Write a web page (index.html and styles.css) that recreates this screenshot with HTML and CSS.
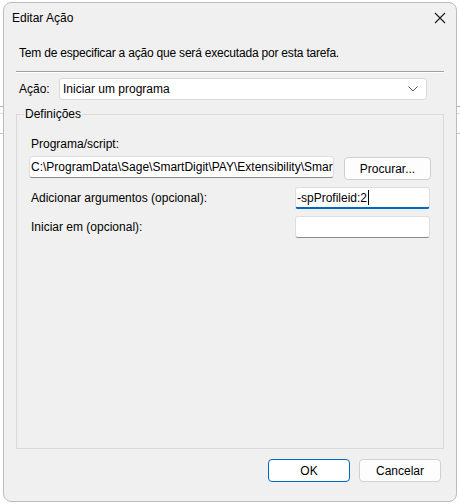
FILE: index.html
```html
<!DOCTYPE html>
<html lang="pt">
<head>
<meta charset="utf-8">
<title>Editar Ação</title>
<link rel="stylesheet" href="styles.css">
</head>
<body>
<div class="window">
  <div class="titlebar">
    <span class="title">Editar Ação</span>
    <span class="close" aria-label="Fechar">
      <svg width="12" height="12" viewBox="0 0 12 12"><path d="M1 1 L11 11 M11 1 L1 11" stroke="#1a1a1a" stroke-width="1.1" fill="none"/></svg>
    </span>
  </div>
  <div class="content">
    <p class="intro">Tem de especificar a ação que será executada por esta tarefa.</p>
    <div class="sep"></div>
    <div class="action-row">
      <span class="action-label">Ação:</span>
      <div class="combo">
        <span>Iniciar um programa</span>
        <svg class="chev" width="10" height="6" viewBox="0 0 10 6"><path d="M0.5 0.5 L5 5 L9.5 0.5" stroke="#5a5a5a" stroke-width="1" fill="none"/></svg>
      </div>
    </div>
    <fieldset class="group">
      <legend>Definições</legend>
      <div class="group-body">
        <div class="label prog-label">Programa/script:</div>
        <div class="prog-row">
          <div class="input prog-input">C:\ProgramData\Sage\SmartDigit\PAY\Extensibility\Smar</div>
          <div class="btn browse">Procurar...</div>
        </div>
        <div class="field-row args-row">
          <span class="label">Adicionar argumentos (opcional):</span>
          <div class="input small focused">-spProfileid:2<span class="caret"></span></div>
        </div>
        <div class="field-row start-row">
          <span class="label">Iniciar em (opcional):</span>
          <div class="input small"></div>
        </div>
      </div>
    </fieldset>
    <div class="footer">
      <div class="btn primary">OK</div>
      <div class="btn">Cancelar</div>
    </div>
  </div>
</div>
</body>
</html>
```
FILE: styles.css
```css
* { box-sizing: border-box; }
html, body { margin: 0; padding: 0; }
body {
  background-color: #ffffff;
  background-image:
    linear-gradient(to bottom, transparent 106px, #b0b0b0 106px, #b0b0b0 107px, transparent 107px,
      transparent 113px, #d8d8d8 113px, #d8d8d8 114px, transparent 114px,
      transparent 133px, #c4c4c4 133px, #c4c4c4 134px, transparent 134px);
  font-family: "Liberation Sans", Arial, sans-serif;
  font-size: 12px;
  color: #000;
  width: 460px;
  height: 504px;
  overflow: hidden;
}
.window {
  margin: 2px 0 0 3px;
  width: 454px;
  height: 500px;
  border: 1px solid #bcbcbc;
  border-radius: 8px;
  background: #f0f0f0;
  display: flex;
  flex-direction: column;
}
.titlebar {
  height: 30px;
  display: flex;
  align-items: center;
  justify-content: space-between;
  padding: 0 10px 0 8px;
}
.title { line-height: 16px; }
.close { display: flex; width: 12px; height: 12px; }
.content {
  padding: 0 12px;
  display: flex;
  flex-direction: column;
}
.intro {
  margin: 12px 0 0;
  padding-left: 3px;
  line-height: 16px;
  letter-spacing: -0.2px;
}
.sep {
  margin-top: 10px;
  height: 2px;
  border-top: 1px solid #a0a0a0;
  border-bottom: 1px solid #ffffff;
}
.action-row {
  margin-top: 5px;
  display: flex;
  align-items: center;
  padding-left: 3px;
  padding-right: 17px;
}
.action-label { width: 40px; line-height: 16px; }
.combo {
  flex: 1;
  height: 22px;
  background: #fff;
  border: 1px solid #d9d9d9;
  border-radius: 3px;
  display: flex;
  align-items: center;
  justify-content: space-between;
  padding: 0 8px 0 3px;
}
.chev { display: block; }
.group {
  margin: 6px 0 0;
  padding: 0;
  border: 1px solid #dadada;
  min-width: 0;
}
.group legend {
  margin-left: 7px;
  padding: 0 1px;
  line-height: 16px;
}
.group-body {
  height: 312px;
  padding: 0 12px;
}
.label { line-height: 16px; padding-left: 2px; }
.prog-label { margin-top: 14px; }
.prog-row {
  margin-top: 4px;
  display: flex;
  align-items: flex-start;
  gap: 10px;
}
.input {
  height: 22px;
  background: #fff;
  border: 1px solid #dedede;
  border-bottom-color: #8a8a8a;
  border-radius: 3px;
  padding: 0 1px;
  line-height: 20px;
  white-space: nowrap;
  overflow: hidden;
}
.prog-input { width: 305px; }
.btn {
  height: 23px;
  background: #fdfdfd;
  border: 1px solid #d0d0d0;
  border-radius: 4px;
  display: flex;
  align-items: center;
  justify-content: center;
  line-height: 16px;
}
.browse { width: 87px; margin-top: 1px; }
.field-row {
  display: flex;
  align-items: center;
  justify-content: space-between;
  padding-right: 1px;
}
.args-row { margin-top: 7px; }
.start-row { margin-top: 7px; }
.small { width: 135px; }
.focused {
  border-bottom: 2px solid #0067c0;
  display: flex;
  align-items: center;
}
.caret {
  display: inline-block;
  width: 1px;
  height: 15px;
  background: #000;
  margin-left: 1px;
}
.footer {
  margin-top: 10px;
  display: flex;
  justify-content: flex-end;
  gap: 9px;
  padding-right: 3px;
}
.footer .btn { width: 82px; }
.btn.primary { border-color: #0067c0; background: #fff; }
```
